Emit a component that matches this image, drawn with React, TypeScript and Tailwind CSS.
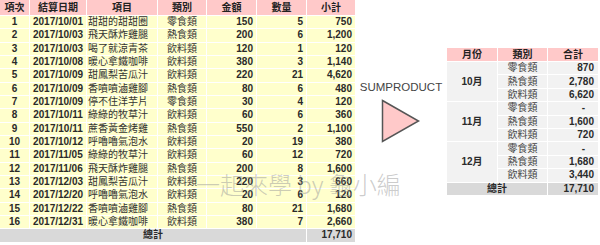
import React from "react";

const rows: [string, string, string, string, string, string, string][] = [
  ["1", "2017/10/01", "甜甜的甜甜圈", "零食類", "150", "5", "750"],
  ["2", "2017/10/03", "飛天酥炸雞腿", "熱食類", "200", "6", "1,200"],
  ["3", "2017/10/03", "喝了就涼青茶", "飲料類", "120", "1", "120"],
  ["4", "2017/10/08", "暖心拿鐵咖啡", "飲料類", "380", "3", "1,140"],
  ["5", "2017/10/09", "甜鳳梨苦瓜汁", "飲料類", "220", "21", "4,620"],
  ["6", "2017/10/09", "香噴噴滷雞腳", "熱食類", "80", "6", "480"],
  ["7", "2017/10/09", "停不住洋芋片", "零食類", "30", "4", "120"],
  ["8", "2017/10/11", "綠綠的牧草汁", "飲料類", "60", "6", "360"],
  ["9", "2017/10/11", "蔗香黃金烤雞", "熱食類", "550", "2", "1,100"],
  ["10", "2017/10/12", "呼嚕嚕氣泡水", "飲料類", "20", "19", "380"],
  ["11", "2017/11/05", "綠綠的牧草汁", "飲料類", "60", "12", "720"],
  ["12", "2017/11/06", "飛天酥炸雞腿", "熱食類", "200", "8", "1,600"],
  ["13", "2017/12/03", "甜鳳梨苦瓜汁", "飲料類", "220", "3", "660"],
  ["14", "2017/12/20", "呼嚕嚕氣泡水", "飲料類", "20", "6", "120"],
  ["15", "2017/12/22", "香噴噴滷雞腳", "熱食類", "80", "21", "1,680"],
  ["16", "2017/12/31", "暖心拿鐵咖啡", "飲料類", "380", "7", "2,660"],
];

const summary = [
  { month: "10月", items: [["零食類", "870"], ["熱食類", "2,780"], ["飲料類", "6,620"]] },
  { month: "11月", items: [["零食類", "-"], ["熱食類", "1,600"], ["飲料類", "720"]] },
  { month: "12月", items: [["零食類", "-"], ["熱食類", "1,680"], ["飲料類", "3,440"]] },
];

const head = "bg-[#ffc9c9] flex items-center justify-center font-bold text-[#222]";
const cell = "bg-[#ffffcc] flex items-center";

export default function App() {
  return (
    <div className="relative w-[600px] h-[245px] bg-white overflow-hidden font-['Liberation_Sans','Noto_Sans_CJK_TC',sans-serif] text-[10px] leading-none text-[#2a2a2a]">
      <div className="flex">
        {/* source data */}
        <div className="grid grid-cols-[29px_56px_70px_48px_49px_49px_48px] grid-rows-[15px_repeat(17,12.33px)] gap-px w-[355px]">
          {["項次", "結算日期", "項目", "類別", "金額", "數量", "小計"].map((h) => (
            <div key={h} className={head}>{h}</div>
          ))}
          {rows.map((r) => (
            <React.Fragment key={r[0]}>
              <div className={`${cell} justify-center font-bold`}>{r[0]}</div>
              <div className={`${cell} justify-center font-bold`}>{r[1]}</div>
              <div className={`${cell} pl-px text-[#333]`}>{r[2]}</div>
              <div className={`${cell} justify-center text-[#333]`}>{r[3]}</div>
              <div className={`${cell} justify-end pr-[3px] font-bold`}>{r[4]}</div>
              <div className={`${cell} justify-end pr-[3px] font-bold`}>{r[5]}</div>
              <div className={`${cell} justify-end pr-[3px] font-bold`}>{r[6]}</div>
            </React.Fragment>
          ))}
          <div className="col-span-6 bg-[#d9d9d9] flex items-center justify-center font-bold">總計</div>
          <div className="bg-[#d9d9d9] flex items-center justify-end pr-[3px] font-bold">17,710</div>
        </div>

        {/* arrow */}
        <div className="w-[92px] flex flex-col items-center pt-[82px]">
          <div className="text-[11.5px] text-[#444]">SUMPRODUCT</div>
          <svg width="40" height="46" viewBox="0 0 40 46" className="mt-[5px]">
            <polygon points="1.5,1.5 37.5,22 1.5,42.5" fill="#ffc9c9" stroke="#555" strokeWidth="1.5" />
          </svg>
        </div>

        {/* summary */}
        <div className="mt-[48px] grid grid-cols-[50px_49px_50px] grid-rows-[13px_repeat(10,12.4px)] gap-px w-[151px] h-fit">
          {["月份", "類別", "合計"].map((h) => (
            <div key={h} className={head}>{h}</div>
          ))}
          {summary.map((g) => (
            <React.Fragment key={g.month}>
              <div className="row-span-3 bg-[#f2f2f2] flex items-center justify-center font-bold">{g.month}</div>
              {g.items.map(([k, v], i) => (
                <React.Fragment key={k}>
                  <div className={`bg-[#f2f2f2] flex items-center justify-center text-[#444] ${i === 0 ? "" : ""}`}>{k}</div>
                  <div className={`bg-[#f2f2f2] flex items-center justify-end font-bold ${v === "-" ? "pr-[13px]" : "pr-[4px]"}`}>{v}</div>
                </React.Fragment>
              ))}
            </React.Fragment>
          ))}
          <div className="col-span-2 bg-[#d9d9d9] flex items-center justify-center font-bold">總計</div>
          <div className="bg-[#d9d9d9] flex items-center justify-end pr-[4px] font-bold">17,710</div>
        </div>
      </div>

      {/* watermark */}
      <div className="absolute left-[196px] top-[172px] text-[24px] leading-none text-[#9a9a9a]/50 font-['Noto_Sans_CJK_TC','Liberation_Sans',sans-serif] font-light whitespace-nowrap pointer-events-none">
        一起來學 by 龜小編
      </div>
    </div>
  );
}
